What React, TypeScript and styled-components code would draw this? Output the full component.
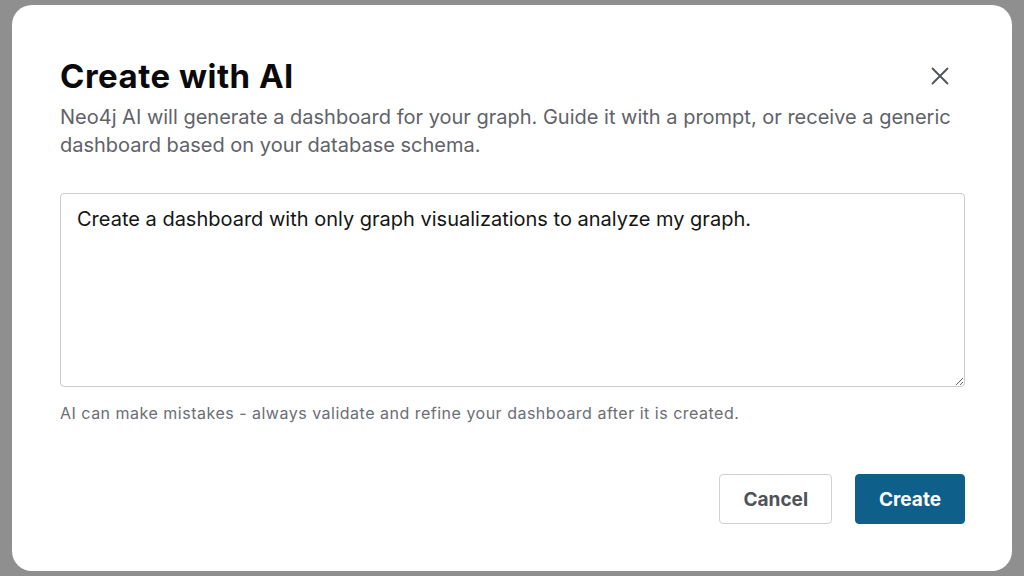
import React, { useState } from "react";
import styled, { createGlobalStyle } from "styled-components";

const GlobalStyle = createGlobalStyle`
  html, body {
    margin: 0;
    padding: 0;
    background: #8f8f8f;
    font-family: Inter, "Liberation Sans", sans-serif;
  }
  * { box-sizing: border-box; }
`;

const Backdrop = styled.div`
  width: 1024px;
  height: 576px;
  padding: 5px 12px;
`;

const Dialog = styled.div`
  width: 1000px;
  height: 566px;
  background: #ffffff;
  border-radius: 20px;
  padding: 49px 47px 47px 48px;
  display: flex;
  flex-direction: column;
`;

const Header = styled.div`
  display: flex;
  align-items: flex-start;
  justify-content: space-between;
`;

const Title = styled.h1`
  margin: 0;
  font-size: 33px;
  line-height: 44px;
  font-weight: 700;
  color: #0a0a0a;
  letter-spacing: 0.5px;
`;

const CloseButton = styled.button`
  border: none;
  background: transparent;
  padding: 0;
  margin: 10px 13px 0 0;
  width: 24px;
  height: 24px;
  display: flex;
  align-items: center;
  justify-content: center;
  color: #4f5257;
  cursor: pointer;
`;

const Description = styled.p`
  margin: 5px 0 0;
  font-size: 20px;
  line-height: 28px;
  color: #5f6268;
`;

const PromptArea = styled.textarea`
  margin-top: 34px;
  width: 100%;
  height: 194px;
  border: 1px solid #c9cbcf;
  border-radius: 4px;
  padding: 11px 16px;
  font-family: Inter, "Liberation Sans", sans-serif;
  font-size: 20px;
  line-height: 28px;
  color: #151515;
  resize: vertical;
  outline: none;
`;

const Hint = styled.div`
  margin-top: 16px;
  font-size: 16px;
  line-height: 20px;
  letter-spacing: 0.5px;
  color: #6b6e74;
`;

const Footer = styled.div`
  margin-top: auto;
  display: flex;
  justify-content: flex-end;
  gap: 23px;
`;

const Button = styled.button<{ $primary?: boolean }>`
  height: 50px;
  padding: 0 23px;
  border-radius: 4px;
  font-family: Inter, "Liberation Sans", sans-serif;
  font-size: 19px;
  font-weight: 700;
  cursor: pointer;
  border: 1px solid ${(p) => (p.$primary ? "#0e5f8a" : "#cfd1d4")};
  background: ${(p) => (p.$primary ? "#0e5f8a" : "#ffffff")};
  color: ${(p) => (p.$primary ? "#ffffff" : "#4f5257")};
`;

export default function App() {
  const [prompt, setPrompt] = useState(
    "Create a dashboard with only graph visualizations to analyze my graph."
  );

  return (
    <>
      <GlobalStyle />
      <Backdrop>
        <Dialog>
          <Header>
            <Title>Create with AI</Title>
            <CloseButton aria-label="Close">
              <svg width="18" height="18" viewBox="0 0 18 18" fill="none">
                <path
                  d="M1.5 1.5L16.5 16.5M16.5 1.5L1.5 16.5"
                  stroke="currentColor"
                  strokeWidth="1.8"
                  strokeLinecap="round"
                />
              </svg>
            </CloseButton>
          </Header>
          <Description>
            Neo4j AI will generate a dashboard for your graph. Guide it with a
            prompt, or receive a generic dashboard based on your database
            schema.
          </Description>
          <PromptArea
            value={prompt}
            onChange={(e) => setPrompt(e.target.value)}
          />
          <Hint>
            AI can make mistakes - always validate and refine your dashboard
            after it is created.
          </Hint>
          <Footer>
            <Button>Cancel</Button>
            <Button $primary>Create</Button>
          </Footer>
        </Dialog>
      </Backdrop>
    </>
  );
}
